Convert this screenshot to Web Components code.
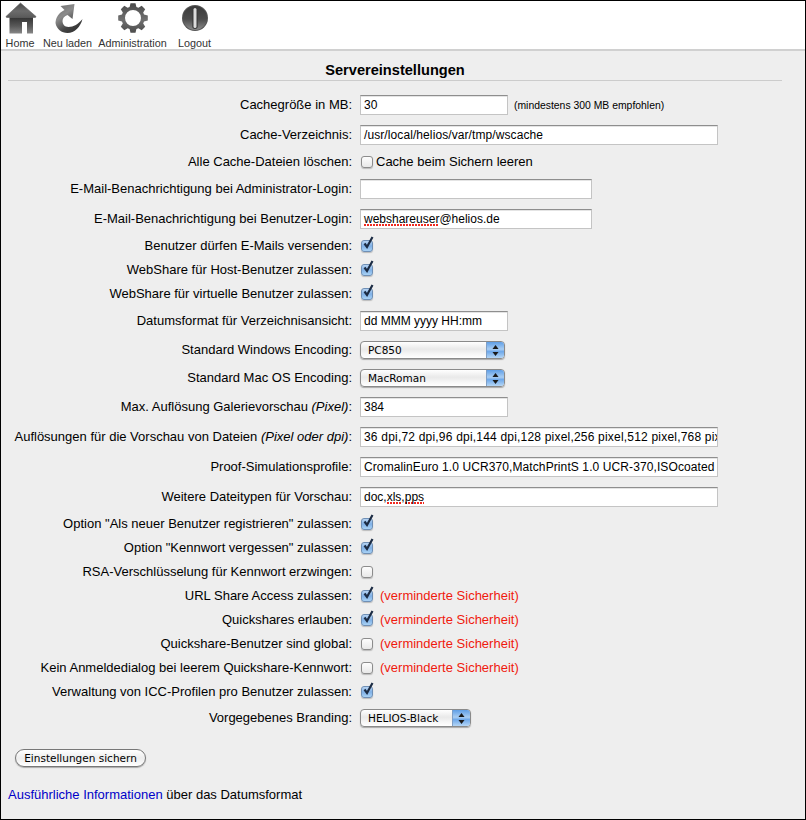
<!DOCTYPE html>
<html lang="de">
<head>
<meta charset="utf-8">
<title>Servereinstellungen</title>
<style>
  html, body { margin: 0; padding: 0; }
  body { font-family: "Liberation Sans", Arial, sans-serif; font-size: 13px; color: #000; }
  .spell { background: repeating-linear-gradient(90deg, #f02a20 0 2px, transparent 2px 3px) left bottom / 100% 2px no-repeat; }
</style>
</head>
<body>

<server-settings>
  <tool-bar slot="toolbar">
    <tool-button icon="home">Home</tool-button>
    <tool-button icon="reload">Neu laden</tool-button>
    <tool-button icon="gear">Administration</tool-button>
    <tool-button icon="logout">Logout</tool-button>
  </tool-bar>

  <setting-row kind="field"><span slot="label">Cachegröße in MB:</span>
    <text-field style="--w:148px">30</text-field><small style="font-size:10.4px;margin-left:6px">(mindestens 300 MB empfohlen)</small></setting-row>
  <setting-row kind="field"><span slot="label">Cache-Verzeichnis:</span>
    <text-field style="--w:358px;--ls:.09px">/usr/local/helios/var/tmp/wscache</text-field></setting-row>
  <setting-row kind="check"><span slot="label">Alle Cache-Dateien löschen:</span>
    <check-box></check-box><span style="margin-left:3px">Cache beim Sichern leeren</span></setting-row>
  <setting-row kind="field"><span slot="label">E-Mail-Benachrichtigung bei Administrator-Login:</span>
    <text-field style="--w:232px"></text-field></setting-row>
  <setting-row kind="field"><span slot="label">E-Mail-Benachrichtigung bei Benutzer-Login:</span>
    <text-field style="--w:232px"><span class="spell">webshareuser</span>@helios.de</text-field></setting-row>
  <setting-row kind="check"><span slot="label">Benutzer dürfen E-Mails versenden:</span><check-box checked></check-box></setting-row>
  <setting-row kind="check"><span slot="label">WebShare für Host-Benutzer zulassen:</span><check-box checked></check-box></setting-row>
  <setting-row kind="check"><span slot="label">WebShare für virtuelle Benutzer zulassen:</span><check-box checked></check-box></setting-row>
  <setting-row kind="field"><span slot="label">Datumsformat für Verzeichnisansicht:</span>
    <text-field style="--w:148px">dd MMM yyyy HH:mm</text-field></setting-row>
  <setting-row kind="select"><span slot="label">Standard Windows Encoding:</span>
    <select-box style="--w:145px">PC850</select-box></setting-row>
  <setting-row kind="select"><span slot="label">Standard Mac OS Encoding:</span>
    <select-box style="--w:145px">MacRoman</select-box></setting-row>
  <setting-row kind="field"><span slot="label">Max. Auflösung Galerievorschau <i>(Pixel)</i>:</span>
    <text-field style="--w:148px">384</text-field></setting-row>
  <setting-row kind="field"><span slot="label">Auflösungen für die Vorschau von Dateien <i>(Pixel oder dpi)</i>:</span>
    <text-field style="--w:358px;--ls:.2px">36 dpi,72 dpi,96 dpi,144 dpi,128 pixel,256 pixel,512 pixel,768 pixel</text-field></setting-row>
  <setting-row kind="field"><span slot="label">Proof-Simulationsprofile:</span>
    <text-field style="--w:358px;--ls:.1px">CromalinEuro 1.0 UCR370,MatchPrintS 1.0 UCR-370,ISOcoated</text-field></setting-row>
  <setting-row kind="field"><span slot="label">Weitere Dateitypen für Vorschau:</span>
    <text-field style="--w:358px">doc,<span class="spell">xls</span>,<span class="spell">pps</span></text-field></setting-row>
  <setting-row kind="check"><span slot="label">Option "Als neuer Benutzer registrieren" zulassen:</span><check-box checked></check-box></setting-row>
  <setting-row kind="check"><span slot="label">Option "Kennwort vergessen" zulassen:</span><check-box checked></check-box></setting-row>
  <setting-row kind="check"><span slot="label">RSA-Verschlüsselung für Kennwort erzwingen:</span><check-box></check-box></setting-row>
  <setting-row kind="check"><span slot="label">URL Share Access zulassen:</span><check-box checked></check-box><risk-note></risk-note></setting-row>
  <setting-row kind="check"><span slot="label">Quickshares erlauben:</span><check-box checked></check-box><risk-note></risk-note></setting-row>
  <setting-row kind="check"><span slot="label">Quickshare-Benutzer sind global:</span><check-box></check-box><risk-note></risk-note></setting-row>
  <setting-row kind="check"><span slot="label">Kein Anmeldedialog bei leerem Quickshare-Kennwort:</span><check-box></check-box><risk-note></risk-note></setting-row>
  <setting-row kind="check"><span slot="label">Verwaltung von ICC-Profilen pro Benutzer zulassen:</span><check-box checked></check-box></setting-row>
  <setting-row kind="select"><span slot="label">Vorgegebenes Branding:</span>
    <select-box style="--w:111px">HELIOS-Black</select-box></setting-row>

  <push-button slot="save">Einstellungen sichern</push-button>
  <span slot="note"><a href="#" style="color:#0000c8;text-decoration:none">Ausführliche Informationen</a> über das Datumsformat</span>
</server-settings>

<script>
const GRAD = (id, a, b, c) => /* svg */`
  <linearGradient id="${id}" x1="0" y1="0" x2="0" y2="1">
    <stop offset="0" stop-color="${a}"/><stop offset=".55" stop-color="${b}"/><stop offset="1" stop-color="${c}"/>
  </linearGradient>`;

// outline of an 8 tooth gear, in page coordinates
function gearPath(cx, cy, outer, root) {
  const pts = [];
  for (let i = 0; i < 8; i++) {
    const a = i * Math.PI / 4 - Math.PI / 2;
    [[root, -.3], [outer, -.17], [outer, .17], [root, .3]].forEach(([r, d]) => {
      pts.push((cx + r * Math.cos(a + d)).toFixed(1) + " " + (cy + r * Math.sin(a + d)).toFixed(1));
    });
  }
  return "M" + pts.join("L") + "Z";
}

// every icon uses page coordinates in its viewBox, 40 wide around its column centre
const ICONS = {
  home: /* svg */`
    <svg width="40" height="36" viewBox="0 1 40 36">
      <defs>${GRAD("r", "#484848", "#6c6c6c", "#5a5a5a")}${GRAD("b", "#333", "#5a5a5a", "#888")}</defs>
      <path d="M20.500 3 L36 16.500 Q36 17.500 35 17.500 H7 Q6 17.500 6 16.500 Z" fill="url(#r)" stroke="#606060" stroke-width=".6" stroke-linejoin="round"/>
      <path fill-rule="evenodd" d="M9.500 17.500H33V33.500H9.500Z M22 22V33.500H27V22Z" fill="url(#b)"/>
    </svg>`,
  reload: /* svg */`
    <svg width="40" height="36" viewBox="47.500 1 40 36">
      <defs>
        <linearGradient id="a" x1="0" y1="0" x2=".7" y2="1">
          <stop offset="0" stop-color="#6a6a6a"/><stop offset=".4" stop-color="#8c8c8c"/><stop offset=".75" stop-color="#444"/><stop offset="1" stop-color="#333"/>
        </linearGradient>
      </defs>
      <path d="M74 4 L60 6 L64 10 C58 13 55 18 55 23 C56 29 61 33 67 33 C74 33 80 27 82 19 C78 24 73 27 68 27 C64 27 62 24 62 21 C62 18 64 16 67 15 L72 19 Z" fill="url(#a)"/>
    </svg>`,
  gear: /* svg */`
    <svg width="40" height="36" viewBox="112.500 1 40 36">
      <defs>${GRAD("g", "#4a4a4a", "#707070", "#4c4c4c")}</defs>
      <path fill-rule="evenodd" fill="url(#g)" d="${gearPath(132.5, 18, 15, 11.5)} M132.500 10 A8 8 0 1 0 132.500 26 A8 8 0 1 0 132.500 10Z"/>
    </svg>`,
  logout: /* svg */`
    <svg width="40" height="36" viewBox="174.500 1 40 36">
      <defs>${GRAD("l", "#3a3a3a", "#4c4c4c", "#8a8a8a")}</defs>
      <circle cx="194.500" cy="18" r="13" fill="#555"/>
      <circle cx="194.500" cy="18" r="12" fill="url(#l)"/>
      <rect x="191.800" y="7" width="5.400" height="22" rx="2.700" fill="#3c3c3c"/>
      <rect x="193" y="8" width="3" height="20" rx="1.500" fill="#dcdcdc"/>
    </svg>`
};

// small helper so every element below is just a template plus a tag name
function define(tag, html) {
  const template = document.createElement("template");
  template.innerHTML = html;
  customElements.define(tag, class extends HTMLElement {
    constructor() {
      super();
      this.attachShadow({ mode: "open" }).appendChild(template.content.cloneNode(true));
    }
  });
}

define("server-settings", /* html */`
  <style>
    :host { display: block; box-sizing: border-box; width: 806px; height: 820px; border: 1px solid #000; background: #eee; overflow: hidden; }
    .top { height: 48px; background: #fff; border-bottom: 2px solid #d0d0d0; }
    header { margin: 11px 23px 0 7px; height: 18px; border-bottom: 1px solid #ccc; text-align: center; font: bold 14.600px/16px "Liberation Sans", Arial, sans-serif; }
    .form { margin-top: 9px; }
    .save { margin: 17px 0 0 14px; height: 18px; }
    .note { margin: 20px 0 0 7px; line-height: 15px; }
  </style>
  <div class="top"><slot name="toolbar"></slot></div>
  <header>Servereinstellungen</header>
  <div class="form"><slot></slot></div>
  <div class="save"><slot name="save"></slot></div>
  <div class="note"><slot name="note"></slot></div>
`);

define("tool-bar", /* html */`
  <style>
    :host { display: grid; grid-template-columns: 38px 57px 73px 51px; height: 48px; }
  </style>
  <slot></slot>
`);

class ToolButton extends HTMLElement {
  constructor() {
    super();
    const icon = ICONS[this.getAttribute("icon")];
    this.attachShadow({ mode: "open" }).innerHTML = /* html */`
      <style>
        :host { display: flex; flex-direction: column; align-items: center; font: 10.800px/12px "Liberation Sans", Arial, sans-serif; color: #333; white-space: nowrap; }
        svg { display: block; flex: none; }
      </style>
      ${icon}
      <slot></slot>`;
  }
}
customElements.define("tool-button", ToolButton);

define("setting-row", /* html */`
  <style>
    :host { display: grid; grid-template-columns: 351px 1fr; column-gap: 8px; align-items: center; height: 30px; white-space: nowrap; line-height: 15px; }
    :host([kind="check"]) { height: 24px; }
    :host([kind="select"]) { height: 28px; }
    .label { text-align: right; padding-bottom: 1px; }
    .ctl { display: flex; align-items: center; }
    .ctl ::slotted(span), ::slotted(risk-note) { margin-bottom: 1px; }
  </style>
  <div class="label"><slot name="label"></slot></div>
  <div class="ctl"><slot></slot></div>
`);

define("text-field", /* html */`
  <style>
    :host { display: block; box-sizing: border-box; width: var(--w); height: 20px; background: #fff; border: 1px solid #c4c4c4; border-top-color: #8e8e8e; box-shadow: inset 0 1px 0 #e4e4e4; padding: 0 3px; font: 12px/19px "Liberation Sans", Arial, sans-serif; letter-spacing: var(--ls, 0); overflow: hidden; white-space: nowrap; }
  </style>
  <slot></slot>
`);

class CheckBox extends HTMLElement {
  constructor() {
    super();
    const mark = this.hasAttribute("checked")
      ? `<svg viewBox="0 0 14 16" width="14" height="16"><path d="M3.500 8.500 L6 12 L11.500 2" fill="none" stroke="#1c2c44" stroke-width="2.200"/></svg>`
      : "";
    this.attachShadow({ mode: "open" }).innerHTML = /* html */`
      <style>
        :host { display: block; position: relative; flex: none; box-sizing: border-box; width: 12px; height: 12px; margin-left: 1px; border: 1px solid #8c8c8c; border-radius: 3px; background: linear-gradient(#fdfdfd, #e8e8e8); box-shadow: 0 1px 1px #bbb; }
        :host([checked]) { border-color: #6f8fb5; background: linear-gradient(#b8d4f2 0, #7fb0e6 50%, #a9d2f5 100%); }
        svg { position: absolute; left: -1px; top: -6px; }
      </style>${mark}`;
  }
}
customElements.define("check-box", CheckBox);

define("risk-note", /* html */`
  <style>
    :host { display: block; margin-left: 7px; color: #f01a0e; }
  </style>
  (verminderte Sicherheit)
`);

define("select-box", /* html */`
  <style>
    :host { display: flex; box-sizing: border-box; width: var(--w); height: 18px; border: 1px solid #8a8a8a; border-radius: 4px; background: linear-gradient(#fff 0, #e9e9e9 45%, #f6f6f6 75%, #fff 100%); box-shadow: 0 1px 1px #aaa; overflow: hidden; font: 10.500px/16px "DejaVu Sans", "Liberation Sans", sans-serif; }
    .text { flex: 1; padding-left: 7px; }
    .arrows { width: 17px; background: linear-gradient(#5f9ee6 0, #a9cdf2 45%, #6ea8ea 60%, #b5d6f5 100%); display: flex; align-items: center; justify-content: center; border-left: 1px solid #7f9fc6; }
    svg { display: block; }
  </style>
  <div class="text"><slot></slot></div>
  <div class="arrows"><svg width="7" height="11" viewBox="0 0 7 11"><path d="M3.500 0 L6.500 4 H.5Z M3.500 11 L.5 7 H6.500Z" fill="#1a1a1a"/></svg></div>
`);

define("push-button", /* html */`
  <style>
    :host { display: inline-block; box-sizing: border-box; width: 131px; height: 18px; border: 1px solid #777; border-radius: 9px; background: linear-gradient(#fff 0, #ededed 50%, #f4f4f4 70%, #fff 100%); box-shadow: 0 1px 1px #aaa; text-align: center; font: 10.500px/16px "DejaVu Sans", "Liberation Sans", sans-serif; white-space: nowrap; }
  </style>
  <slot></slot>
`);
</script>
</body>
</html>
